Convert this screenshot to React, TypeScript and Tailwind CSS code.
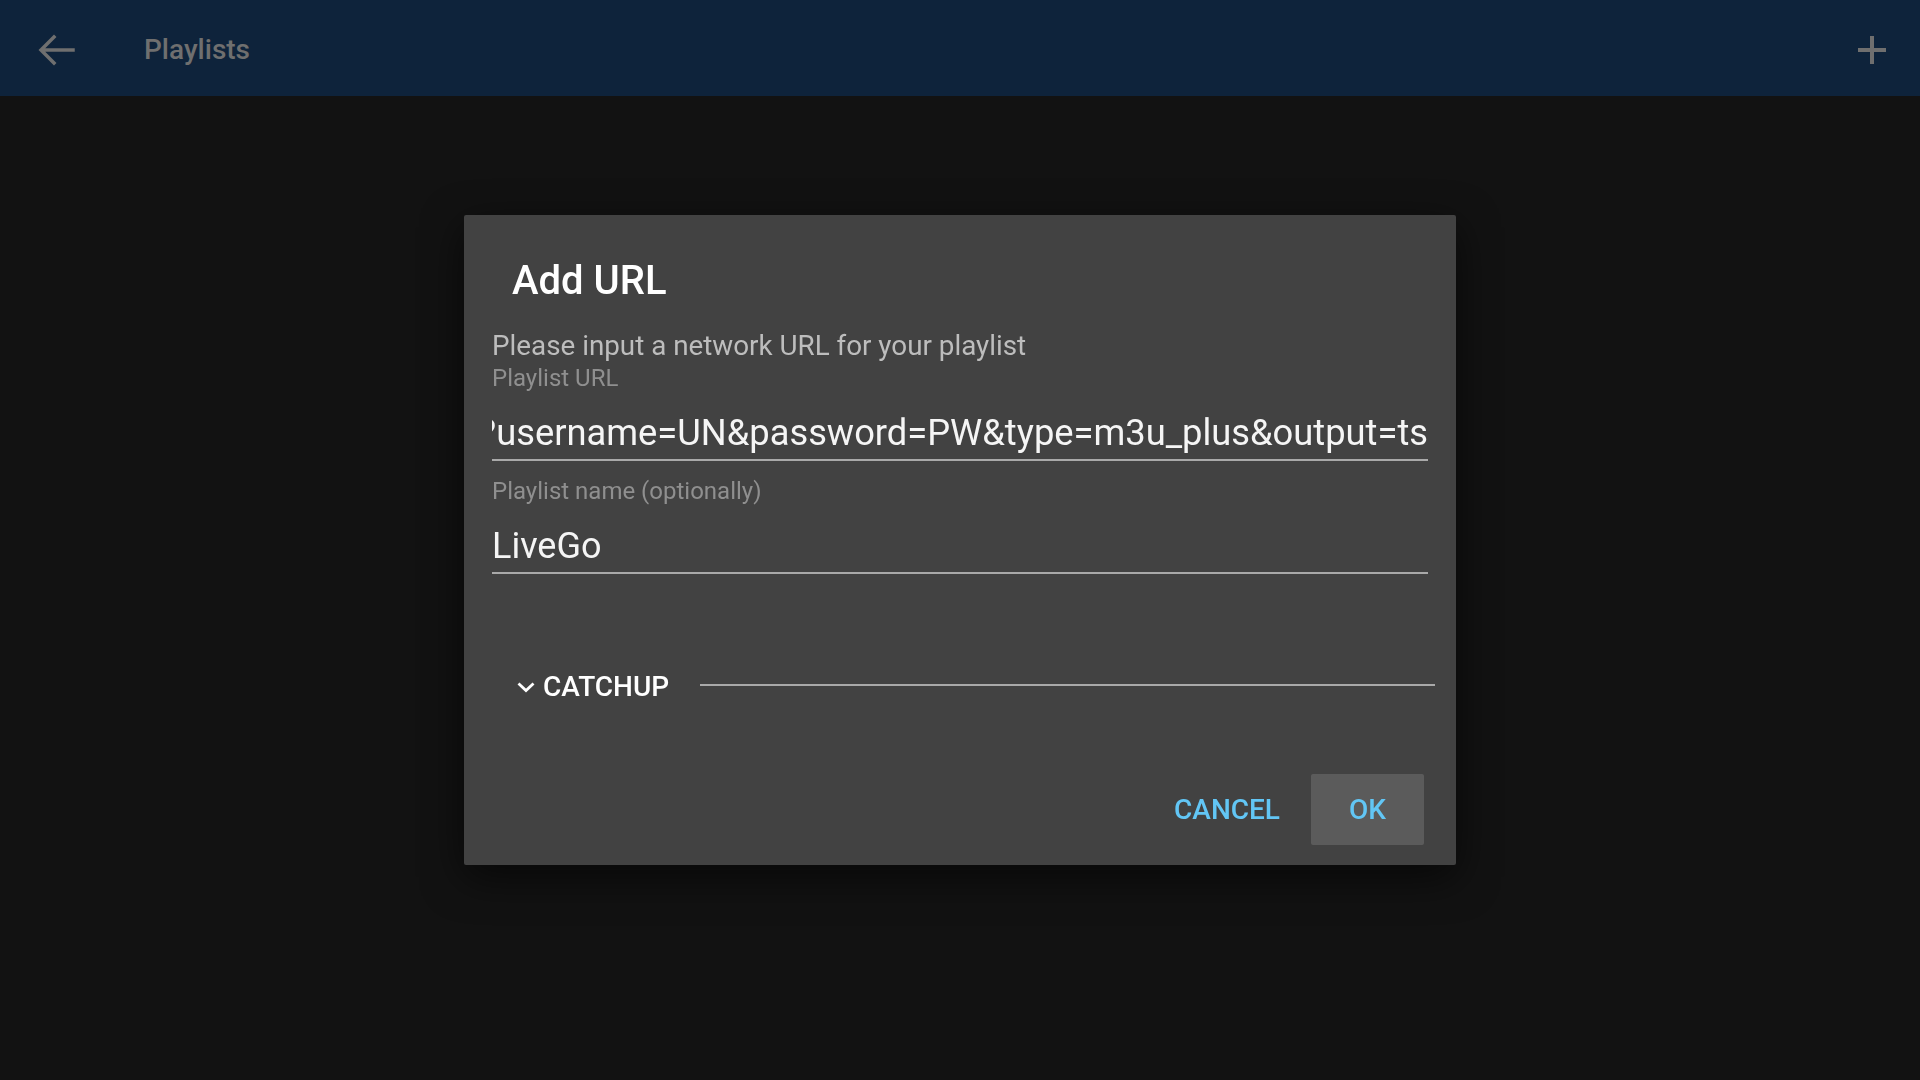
import React from 'react';

const URL_VALUE = 'http://livego.example.net:8080/get.php?username=UN&password=PW&type=m3u_plus&output=ts';

const BackIcon = () => (
    <svg width="48" height="48" viewBox="0 0 48 48" fill="none">
        <path d="M41 24H10M22 11L9 24l13 13" stroke="#6f6f6f" strokeWidth="3.5" strokeLinecap="square" />
    </svg>
);

const PlusIcon = () => (
    <svg width="48" height="48" viewBox="0 0 24 24" fill="#6f6f6f">
        <path d="M19 13h-6v6h-2v-6H5v-2h6V5h2v6h6v2z" />
    </svg>
);

const ChevronIcon = () => (
    <svg width="18" height="11" viewBox="0 0 18 11" fill="none">
        <polyline points="1.5,1.5 9,8.5 16.5,1.5" stroke="#ffffff" strokeWidth="2.8" />
    </svg>
);

const App: React.FC = () => {
    return (
        <div className="relative w-full h-screen bg-[#121212] font-['Roboto',sans-serif] overflow-hidden">
            {/* Top bar */}
            <header className="h-24 bg-[#0e233b] flex items-center pl-8 pr-6 pt-[3px]">
                <BackIcon />
                <span className="ml-16 text-[28px] font-medium text-[#6f6f6f]">Playlists</span>
                <div className="ml-auto">
                    <PlusIcon />
                </div>
            </header>

            {/* Dialog */}
            <div className="fixed inset-0 flex items-center justify-center">
                <div className="w-[992px] bg-[#424242] rounded-[2px] shadow-[0_12px_40px_rgba(0,0,0,0.6)] pt-[42px] pb-5 flex flex-col">
                    <h2 className="pl-12 text-[40px] leading-[48px] font-medium text-white">Add URL</h2>

                    <div className="px-7 flex flex-col">
                        <p className="mt-[25px] text-[27.8px] leading-8 text-[#bdbdbd]">Please input a network URL for your playlist</p>

                        <label className="mt-[2px] text-[24px] leading-7 text-[#8f8f8f]">Playlist URL</label>
                        <div className="pt-[19px] pb-1 border-b-2 border-[#a9a9a9] overflow-hidden flex justify-end">
                            <span className="whitespace-nowrap text-[36.3px] leading-[44px] text-[#f5f5f5]">{URL_VALUE}</span>
                        </div>

                        <label className="mt-4 text-[24px] leading-7 text-[#8f8f8f]">Playlist name (optionally)</label>
                        <div className="pt-[19px] pb-1 border-b-2 border-[#a9a9a9]">
                            <span className="text-[36px] leading-[44px] text-[#f5f5f5]">LiveGo</span>
                        </div>
                    </div>

                    {/* Catchup section */}
                    <div className="mt-[93px] h-10 flex items-center pl-[53px] pr-[21px]">
                        <ChevronIcon />
                        <span className="ml-2 text-[28px] font-medium text-white">CATCHUP</span>
                        <div className="ml-[31px] mb-1 flex-1 h-[2px] bg-[#a9a9a9]" />
                    </div>

                    {/* Actions */}
                    <div className="mt-[67px] flex justify-end items-center gap-[15px] pr-8">
                        <button className="h-[71px] px-4 text-[28px] font-medium text-[#62c6f5]">CANCEL</button>
                        <button className="h-[71px] w-[113px] bg-[#5b5b5b] rounded-[2px] text-[28px] font-medium text-[#62c6f5]">OK</button>
                    </div>
                </div>
            </div>
        </div>
    );
};

export default App;
